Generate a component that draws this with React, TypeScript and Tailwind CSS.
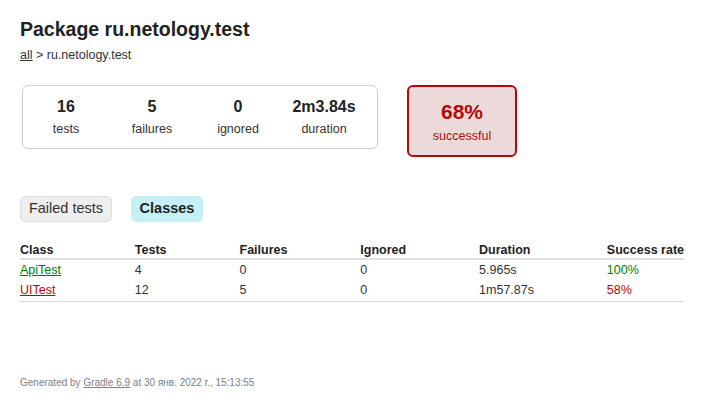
import React from "react";

const rows = [
  { name: "ApiTest", tests: "4", failures: "0", ignored: "0", duration: "5.965s", rate: "100%", ok: true },
  { name: "UITest", tests: "12", failures: "5", ignored: "0", duration: "1m57.87s", rate: "58%", ok: false },
];

export default function App() {
  return (
    <div className="w-[719px] h-[414px] bg-white text-[#333] pl-[20px] pt-[17px] relative" style={{ fontFamily: '"Liberation Sans", Arial, sans-serif' }}>
      <h1 className="text-[19.5px] font-bold leading-[24px] text-[#222]">Package ru.netology.test</h1>
      <div className="mt-[7px] text-[12.5px] leading-[14px] text-[#333]">
        <a className="underline text-[#333]">all</a> &gt; ru.netology.test
      </div>
      <div className="flex items-start mt-[23px]">
        <div className="ml-[2px] w-[356px] h-[64px] border border-[#d0d0d0] rounded-[6px] flex items-center">
          {[
            ["16", "tests", "w-[86px]"],
            ["5", "failures", "w-[86px]"],
            ["0", "ignored", "w-[86px]"],
            ["2m3.84s", "duration", "w-[86px]"],
          ].map(([v, l, w]) => (
            <div key={l} className={`${w} text-center`}>
              <div className="text-[16px] font-bold leading-[18px] text-[#222]">{v}</div>
              <div className="text-[12.5px] leading-[16px] mt-[5px] text-[#333]">{l}</div>
            </div>
          ))}
        </div>
        <div className="ml-[29px] w-[110px] h-[72px] border-2 border-[#b60808] bg-[#ecdada] rounded-[6px] flex flex-col items-center justify-center text-[#b60808]">
          <div className="text-[21px] font-bold leading-[24px] mt-[1px]">68%</div>
          <div className="text-[12.5px] leading-[16px] mt-[4px]">successful</div>
        </div>
      </div>
      <div className="flex mt-[39px] gap-[19px]">
        <div className="w-[92px] h-[26px] bg-[#eeeeee] border border-[#dddddd] rounded-[5px] flex items-center justify-center text-[14.5px] text-[#333]">Failed tests</div>
        <div className="w-[72px] h-[26px] bg-[#c5f0f5] rounded-[5px] flex items-center justify-center text-[14.5px] font-bold text-[#222]">Classes</div>
      </div>
      <table className="mt-[20px] w-[664px] text-[12.5px] border-collapse whitespace-nowrap">
        <thead>
          <tr className="border-b-2 border-[#e0e0e0]">
            <th className="text-left font-bold w-[115px] leading-[16px] text-[#222]">Class</th>
            <th className="text-left font-bold w-[105px] leading-[16px] text-[#222]">Tests</th>
            <th className="text-left font-bold w-[121px] leading-[16px] text-[#222]">Failures</th>
            <th className="text-left font-bold w-[119px] leading-[16px] text-[#222]">Ignored</th>
            <th className="text-left font-bold w-[128px] leading-[16px] text-[#222]">Duration</th>
            <th className="text-left font-bold leading-[16px] text-[#222]">Success rate</th>
          </tr>
        </thead>
        <tbody>
          {rows.map((r, i) => (
            <tr key={r.name} className={i === rows.length - 1 ? "border-b border-[#dddddd]" : ""}>
              <td className="h-[21px] leading-[16px]">
                <a className={`underline ${r.ok ? "text-[#008000]" : "text-[#b60808]"}`}>{r.name}</a>
              </td>
              <td className="leading-[16px]">{r.tests}</td>
              <td className="leading-[16px]">{r.failures}</td>
              <td className="leading-[16px]">{r.ignored}</td>
              <td className="leading-[16px]">{r.duration}</td>
              <td className={`leading-[16px] ${r.ok ? "text-[#008000]" : "text-[#b60808]"}`}>{r.rate}</td>
            </tr>
          ))}
        </tbody>
      </table>
      <div className="mt-[74px] text-[10px] text-[#808080] leading-[14px]">
        Generated by <a className="underline text-[#808080]">Gradle 6.9</a> at 30 янв. 2022 г., 15:13:55
      </div>
    </div>
  );
}
